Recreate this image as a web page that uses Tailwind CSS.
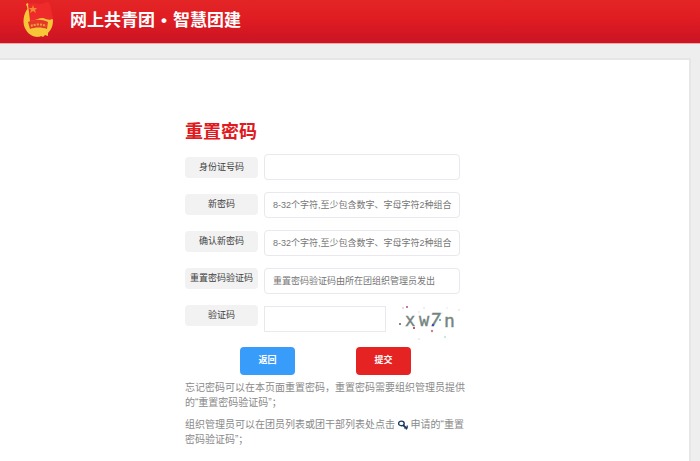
<!DOCTYPE html>
<html lang="zh-CN">
<head>
    <meta charset="UTF-8">
    <meta name="viewport" content="width=device-width, initial-scale=1.0">
    <title>重置密码</title>
    <script src="https://cdn.jsdelivr.net/npm/@tailwindcss/browser@4"></script>
</head>
<body class="min-h-screen flex flex-col bg-[#eeeeee] font-['Liberation_Sans','Noto_Sans_CJK_SC',sans-serif]">
    <!-- Header -->
    <header class="h-11 shrink-0 flex items-center gap-4 pl-[22px] pb-1 bg-linear-to-b from-[#e42526] via-[#de1b22] to-[#c91424] border-b border-[#f7a5a8]">
        <svg class="w-8 h-[38px] shrink-0" viewBox="0 0 32 38" aria-hidden="true">
            <path d="M6 7C1 13 0 23 4 29c4 7 12 8 15 6l2 1 2-2 3 1v-3c3-3 5-7 5-13L25 9 8 10z" fill="#f6c638"/>
            <path d="M4 3l2-1 2 6-2 1z" fill="#f6c638"/>
            <path d="M6 4C12 0 16 5 22 2c3-2 5-1 6 1l3 14c-4 4-7 0-11 0-4 0-7 3-12 3L7 11z" fill="#ee2b2a"/>
            <path d="M11 4l1 3h3l-2 2 1 3-3-2-3 2 1-3-2-2h3z" fill="#f08a34"/>
            <path d="M6 21c6-3 14-3 20 0l-1 7c-5-2-12-2-17 0z" fill="#e5382b"/>
            <path d="M9 25c4-2 11-2 15 0" fill="none" stroke="#f0a035" stroke-width="2" stroke-dasharray="2 1"/>
        </svg>
        <h1 class="pt-[2px] text-[17px] leading-6 font-bold text-white">网上共青团<span class="mx-[6px]">•</span>智慧团建</h1>
    </header>

    <!-- Reset password -->
    <main class="grow mt-[14px] mr-[9px] pt-[60px] pl-[185px] bg-white border-t-2 border-r-2 border-[#e6e6e6]">
        <form>
            <h2 class="text-[18px] leading-6 font-bold text-[#e01a20]">重置密码</h2>
            <div class="flex gap-[6px] mt-[10px]">
                <div class="flex flex-col gap-4 pt-[3px] w-[73px] text-[9px] leading-[21px] text-center text-[#404040]">
                    <label for="idNumber" class="rounded-sm bg-[#f2f2f2]">身份证号码</label>
                    <label for="password" class="rounded-sm bg-[#f2f2f2]">新密码</label>
                    <label for="confirmPassword" class="rounded-sm bg-[#f2f2f2]">确认新密码</label>
                    <label for="resetCode" class="rounded-sm bg-[#f2f2f2]">重置密码验证码</label>
                    <label for="captcha" class="rounded-sm bg-[#f2f2f2]">验证码</label>
                </div>
                <div class="flex flex-col gap-3 w-[196px] text-[9px]">
                    <input id="idNumber" type="text" class="h-[26px] pl-2 pr-1 rounded-sm border border-[#e8e8ee] bg-white">
                    <input id="password" type="password" placeholder="8-32个字符,至少包含数字、字母字符2种组合" class="h-[26px] pl-2 pr-1 rounded-sm border border-[#e8e8ee] bg-white placeholder:text-[#757575]">
                    <input id="confirmPassword" type="password" placeholder="8-32个字符,至少包含数字、字母字符2种组合" class="h-[26px] pl-2 pr-1 rounded-sm border border-[#e8e8ee] bg-white placeholder:text-[#757575]">
                    <input id="resetCode" type="text" placeholder="重置密码验证码由所在团组织管理员发出" class="h-[26px] pl-2 pr-1 rounded-sm border border-[#e8e8ee] bg-white placeholder:text-[#757575]">
                    <div class="flex items-start gap-3">
                        <input id="captcha" type="text" class="w-[122px] h-[26px] pl-2 pr-1 border border-[#e8e8ee] bg-white">
                        <svg class="w-[62px] h-[34px] shrink-0 overflow-visible" viewBox="0 0 62 34" role="img" aria-label="验证码图片">
                            <g font-family="DejaVu Sans Mono, monospace" font-size="17" fill="#748480" stroke="#748480" stroke-width="0.4">
                                <text x="7" y="20">x</text>
                                <text x="21" y="20">w</text>
                                <text x="32" y="20" font-size="18" font-style="italic">7</text>
                                <text x="46" y="21" font-size="18">n</text>
                            </g>
                            <circle cx="2" cy="18" r="1" fill="#59605e"/>
                            <circle cx="9" cy="1" r="1" fill="#b34a78"/>
                            <circle cx="5" cy="2" r="0.7" fill="#d99898"/>
                            <circle cx="16" cy="22" r="1" fill="#9b3131"/>
                            <circle cx="35" cy="19" r="1.2" fill="#3d50a8"/>
                            <circle cx="42" cy="14" r="1" fill="#43a3ad"/>
                            <circle cx="34" cy="25" r="1.2" fill="#c98291"/>
                            <circle cx="52" cy="12" r="0.8" fill="#a99243"/>
                            <circle cx="47" cy="31" r="0.8" fill="#8bcac4"/>
                            <circle cx="21" cy="33" r="0.7" fill="#c5d5c8"/>
                            <circle cx="21" cy="6" r="0.7" fill="#d8cccc"/>
                            <circle cx="26" cy="2" r="0.7" fill="#c9d8cf"/>
                            <circle cx="49" cy="2" r="0.7" fill="#d3dfdf"/>
                            <circle cx="61" cy="4" r="0.7" fill="#ced0ce"/>
                            <circle cx="44" cy="7" r="0.6" fill="#b6d7d9"/>
                        </svg>
                    </div>
                </div>
            </div>
            <div class="flex gap-[61px] mt-[7px] pl-[55px] text-[9px] font-bold text-white">
                <button type="button" class="w-[55px] h-7 rounded-sm bg-[#389cfb]">返回</button>
                <button type="submit" class="w-[55px] h-7 rounded-sm bg-[#e52323]">提交</button>
            </div>
        </form>

        <div class="flex flex-col gap-[7px] mt-[5px] w-[282px] text-[10px] leading-[15px] text-[#8a8a8a]">
            <p>忘记密码可以在本页面重置密码，重置密码需要组织管理员提供的“重置密码验证码”；</p>
            <p>组织管理员可以在团员列表或团干部列表处点击
                <svg class="inline-block align-middle w-[10px] h-[10px]" viewBox="0 0 10 10" fill="none" stroke="#1c3b5a" aria-hidden="true">
                    <ellipse cx="3.4" cy="3.4" rx="2.8" ry="2.3" stroke-width="1.4"/>
                    <path d="M5 5L9 8.6" stroke-width="1.8"/>
                    <path d="M6.6 8.6L7.6 7.2M8.2 9.6L9.2 7.2V5.6" stroke-width="1.3"/>
                </svg>
                申请的“重置密码验证码”；</p>
        </div>
    </main>
</body>
</html>
